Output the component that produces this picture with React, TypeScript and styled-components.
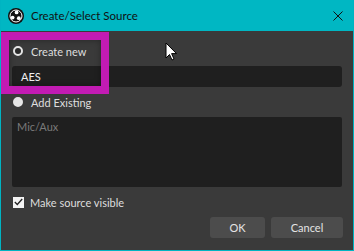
import styled, { createGlobalStyle } from "styled-components";

const Global = createGlobalStyle`
  html, body {
    margin: 0;
    padding: 0;
    background: #3a3a3a;
  }
  body {
    font-family: Lato, "Noto Sans", "Liberation Sans", sans-serif;
    font-size: 11px;
  }
`;

const Window = styled.div`
  position: relative;
  width: 354px;
  height: 251px;
  box-sizing: border-box;
  border: 1px solid #00b4c2;
  border-top: none;
  background: #3a3a3a;
  display: flex;
  flex-direction: column;
  overflow: hidden;
`;

const TitleBar = styled.div`
  height: 31px;
  margin: 0 -1px;
  background: #00b7c3;
  display: flex;
  align-items: center;
  padding: 0 11px 0 8px;
  gap: 7px;
  color: #111;
  font-size: 11.5px;
`;

const Title = styled.span`
  flex: 1;
`;

const Body = styled.div`
  flex: 1;
  display: flex;
  flex-direction: column;
  gap: 5px;
  padding: 10px 11px 0 11px;
`;

const OptionRow = styled.label`
  height: 20px;
  display: flex;
  align-items: center;
  gap: 8px;
  padding-left: 1px;
  color: #dedede;
`;

const Radio = styled.span<{ $filled?: boolean }>`
  width: 10px;
  height: 10px;
  box-sizing: border-box;
  border-radius: 50%;
  border: 2px solid #e6e6e6;
  background: ${(p) => (p.$filled ? "#e6e6e6" : "#2a2a2a")};
`;

const Field = styled.div`
  height: 21px;
  border-radius: 3px;
  background: #1f1f1f;
  color: #f0f0f0;
  display: flex;
  align-items: center;
  padding-left: 9px;
`;

const ListBox = styled.div`
  height: 70px;
  border-radius: 2px;
  background: #1f1f1f;
  color: #7a7a7a;
  padding: 3px 5px;
  box-sizing: border-box;
`;

const Check = styled.span`
  width: 11px;
  height: 11px;
  background: #f4f4f4;
  display: flex;
  align-items: center;
  justify-content: center;
`;

const CheckRow = styled(OptionRow)`
  gap: 6px;
`;

const Buttons = styled.div`
  display: flex;
  justify-content: flex-end;
  gap: 6px;
  margin-right: -1px;
`;

const Button = styled.button<{ $w: number }>`
  width: ${(p) => p.$w}px;
  height: 21px;
  border: none;
  border-radius: 3px;
  background: #4c4c4c;
  color: #e4e4e4;
  font-family: inherit;
  font-size: 11px;
  padding: 0;
`;

const Highlight = styled.div`
  position: absolute;
  left: 0;
  top: 32px;
  width: 108px;
  height: 62px;
  box-sizing: border-box;
  border: 8px solid #c21bb3;
  box-shadow: inset 0 0 6px rgba(0, 0, 0, 0.35);
  pointer-events: none;
`;

const Cursor = styled.svg`
  position: absolute;
  left: 164px;
  top: 42px;
`;

function ObsLogo() {
  return (
    <svg width="16" height="16" viewBox="0 0 16 16">
      <circle cx="8" cy="8" r="8" fill="#111" />
      <circle cx="8" cy="8" r="6" fill="none" stroke="#fff" strokeWidth="1" />
      <circle cx="8.6" cy="4.4" r="1.9" fill="#fff" />
      <circle cx="4.6" cy="9.6" r="1.9" fill="#fff" />
      <circle cx="10.8" cy="10.2" r="1.9" fill="#fff" />
    </svg>
  );
}

export default function App() {
  return (
    <>
      <Global />
      <Window>
        <TitleBar>
          <ObsLogo />
          <Title>Create/Select Source</Title>
          <svg width="10" height="10" viewBox="0 0 10 10">
            <path d="M0.5 0.5 L9.5 9.5 M9.5 0.5 L0.5 9.5" stroke="#111" strokeWidth="1" />
          </svg>
        </TitleBar>
        <Body>
          <OptionRow>
            <Radio />
            Create new
          </OptionRow>
          <Field>AES</Field>
          <OptionRow>
            <Radio $filled />
            Add Existing
          </OptionRow>
          <ListBox>Mic/Aux</ListBox>
          <CheckRow>
            <Check>
              <svg width="9" height="8" viewBox="0 0 9 8">
                <path d="M0.8 4 L3.3 6.5 L8.2 1" fill="none" stroke="#222" strokeWidth="1.3" />
              </svg>
            </Check>
            Make source visible
          </CheckRow>
          <Buttons>
            <Button $w={55}>OK</Button>
            <Button $w={72}>Cancel</Button>
          </Buttons>
        </Body>
        <Highlight />
        <Cursor width="13" height="20" viewBox="0 0 13 20">
          <path d="M1 1 L1 16 L4.5 12.5 L7 18 L9 17 L6.6 11.6 L11.5 11.6 Z" fill="#fff" stroke="#000" strokeWidth="1" />
        </Cursor>
      </Window>
    </>
  );
}
